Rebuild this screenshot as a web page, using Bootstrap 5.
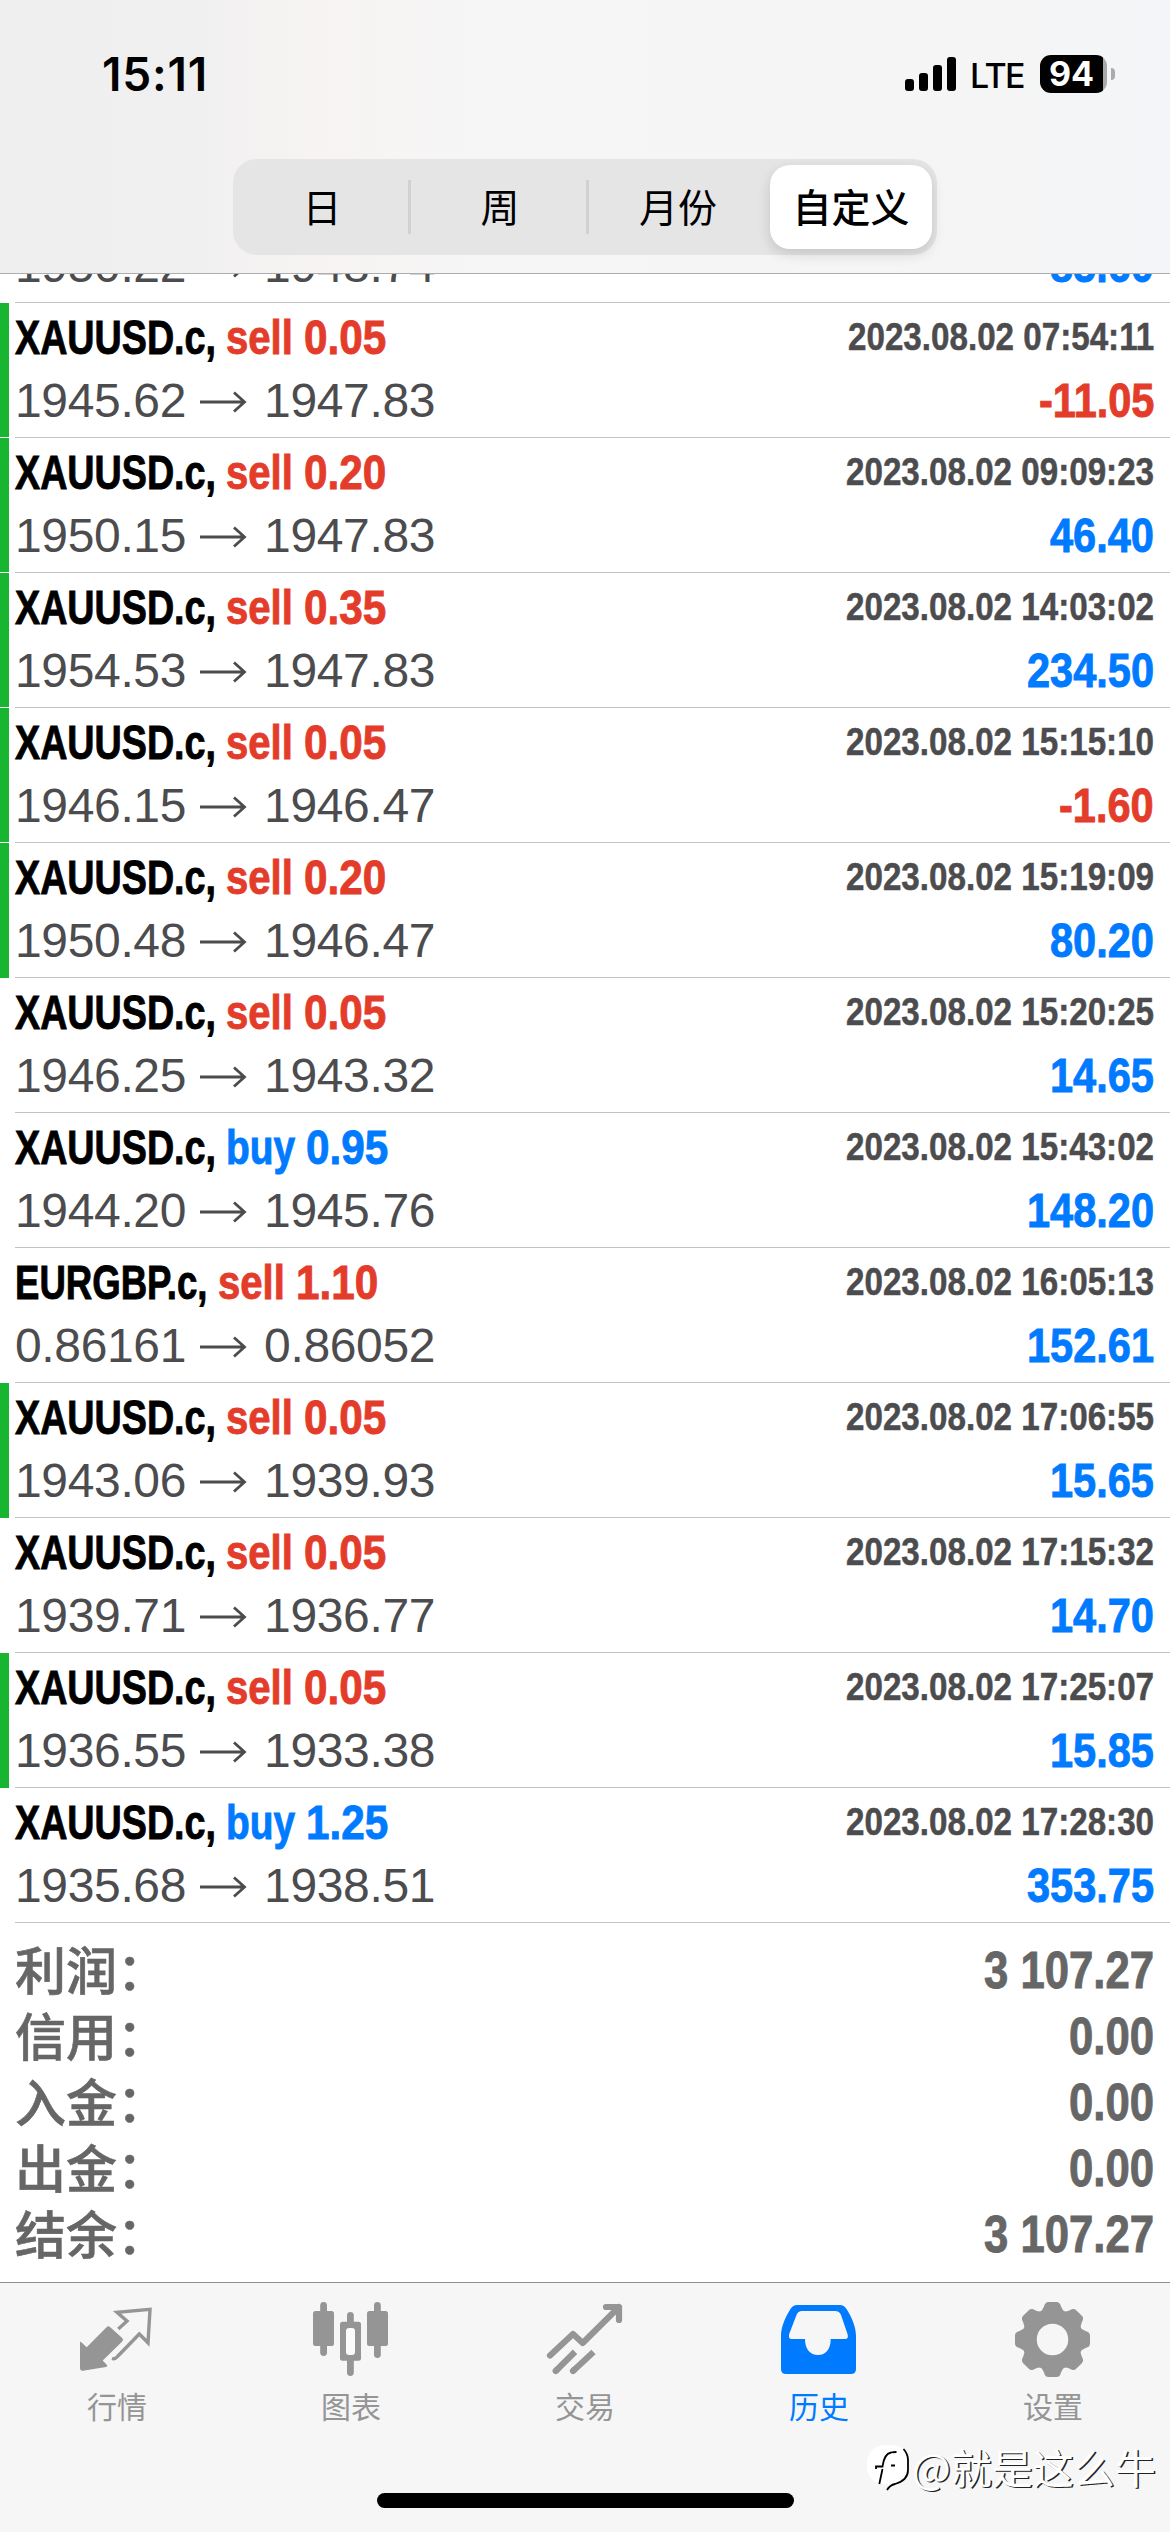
<!DOCTYPE html>
<html lang="zh-CN">
<head>
<meta charset="utf-8">
<meta name="viewport" content="width=device-width, initial-scale=1">
<title>历史</title>
<link href="https://cdn.jsdelivr.net/npm/bootstrap@5.3.0/dist/css/bootstrap.min.css" rel="stylesheet">
<style>
body{width:1170px;height:2532px;overflow:hidden;background:#fff;color:#000;font-family:"Liberation Sans","Noto Sans CJK SC",sans-serif}
.top-bar{height:274px;border-bottom:1px solid #adadb0;background:linear-gradient(90deg,#efefef 0,#f1f0f0 17%,#f7f4f3 28%,#f6f6f6 42%,#f5f5f5 85%,#f3f5f8 100%)}
.status{height:159px;padding:0 55px 0 102px;font-family:Inter,sans-serif}
.clock{font-size:46px;font-weight:600;line-height:56px;margin-top:46px;letter-spacing:.8px}
.net{margin-top:55px;height:38px}
.lte{font-size:34px;font-weight:500;line-height:38px;letter-spacing:-1.6px;margin:2px 0 0 14px}
.batt{width:67px;height:38px;margin-left:16px;border-radius:11px;background:linear-gradient(90deg,#000 63px,#a9a9a9 63px);color:#fff;font-size:34px;font-weight:700;line-height:38px;text-align:center;padding-right:4px}
.nub{width:4px;height:12px;margin:13px 0 0 4px;border-radius:0 4px 4px 0;background:#ababab}
.seg{width:704px;height:96px;border-radius:24px;background:#e6e5e6;padding:6px 5px 6px 0;font-family:"Noto Sans CJK SC",sans-serif;font-size:39px}
.seg-item{width:178px;height:84px;position:relative;padding-bottom:4px}
.seg-item.split{background:linear-gradient(#d1d1d4,#d1d1d4) right center/3px 54px no-repeat}
.seg-item.on{width:162px;margin-left:auto;background:#fff;border-radius:20px;font-weight:500;box-shadow:0 5px 14px rgba(0,0,0,.14)}
.deals{height:1649px;overflow:hidden}
.deal{height:135px;padding:6px 16px 0 15px;position:relative;background:linear-gradient(#c3c3c6,#c3c3c6) 15px 100%/1155px 1px no-repeat}
.deal.mark-g{border-left:9px solid #17b530;padding-left:6px;background-position:6px 100%}
.deal.mark-g+.deal.mark-g::before{content:"";position:absolute;left:-9px;top:-1px;width:9px;height:1px;background:#fff}
.sq{display:inline-block;transform-origin:0 50%;white-space:pre;-webkit-text-stroke:.9px currentColor}
.line1{height:61px;font-size:48px;font-weight:700;line-height:58px;white-space:nowrap}
.when{font-size:38px;line-height:57px;color:#4c4c4e;-webkit-text-stroke-width:.5px}
.line2{height:62px;font-size:48px;line-height:62px;color:#4c4c4e}
.price{letter-spacing:-.35px}
.amt{font-weight:700}
.c-red{color:#e43c2a}.c-blue{color:#007aff}
.arrow{margin:2px 17px 0 14px}
.totals{height:359px;padding:14px 16px 0 15px;color:#666}
.total{height:66px;line-height:67px;font-size:52px;font-weight:700}
.total .lbl{font-family:"Noto Sans CJK SC",sans-serif;font-size:51px;font-weight:500;line-height:62px;-webkit-text-stroke:.6px currentColor}
.tabs{height:250px;border-top:1px solid #8e8e91;background:#f6f6f6;position:relative}
.tab{width:234px;padding-top:17px;color:#959595;font-family:"Noto Sans CJK SC",sans-serif;font-size:30px}
.tab svg{width:84px;height:80px}
.tab span{line-height:40px;margin-top:5px}
.tab.on{color:#007aff}
.home{position:absolute;left:377px;top:210px;width:417px;height:15px;border-radius:8px;background:#000}
.wm{position:absolute;left:866px;top:157px;color:#fff;font-family:"Noto Sans CJK SC",sans-serif;font-size:41px;line-height:50px;white-space:nowrap;text-shadow:1.5px 1px 0 #222}
.wm svg{width:46px;height:52px}
</style>
</head>
<body>
<header class="top-bar">
  <div class="status d-flex justify-content-between">
    <div class="clock">15:11</div>
    <div class="net d-flex">
      <svg width="51" height="36" viewBox="0 0 51 36"><rect y="24" width="9" height="12" rx="3"/><rect x="14" y="18" width="9" height="18" rx="3"/><rect x="28" y="10" width="9" height="26" rx="3"/><rect x="42" y="2" width="9" height="34" rx="3"/></svg>
      <div class="lte">LTE</div>
      <div class="batt">94</div>
      <div class="nub"></div>
    </div>
  </div>
  <div class="seg d-flex mx-auto">
    <div class="seg-item split d-flex align-items-center justify-content-center">日</div>
    <div class="seg-item split d-flex align-items-center justify-content-center">周</div>
    <div class="seg-item d-flex align-items-center justify-content-center">月份</div>
    <div class="seg-item on d-flex align-items-center justify-content-center">自定义</div>
  </div>
</header>
<main>
  <section class="deals d-flex flex-column justify-content-end" id="deals"></section>
  <section class="totals" id="totals"></section>
</main>
<nav class="tabs">
  <div class="d-flex">
    <div class="tab d-flex flex-column align-items-center">
      <svg viewBox="0 0 84 80"><path fill="currentColor" d="M5 43Q5 41 6.600 42.500L11.700 47.300 31.800 27Q33.300 25.500 35 27L47.200 38Q49 39.800 47.200 41.500L27.700 60.500 32 65Q33 66.600 31 67L8 70.700Q5 71 5 68Z"/><path fill="none" stroke="currentColor" stroke-width="3.400" d="M43.300 29L52 21 42 12.300 75 9.300 73 42.800 64.300 34 42.500 56.500Q40 59.500 37 58.500"/></svg>
      <span>行情</span></div>
    <div class="tab d-flex flex-column align-items-center">
      <svg viewBox="0 0 84 80" fill="currentColor"><rect x="4" y="11" width="21" height="35" rx="2.500"/><rect x="11.200" y="2" width="6.800" height="54" rx="3.400"/><rect x="58" y="11" width="21" height="35" rx="2.500"/><rect x="65" y="2" width="6.800" height="56" rx="3.400"/><rect x="38" y="12" width="6.800" height="64" rx="3.400"/><rect x="31" y="21.700" width="21" height="39" rx="2.500"/><rect x="37" y="28" width="9" height="27" rx="3" fill="#fbfbfb"/></svg>
      <span>图表</span></div>
    <div class="tab d-flex flex-column align-items-center">
      <svg viewBox="0 0 84 80" fill="none" stroke="currentColor" stroke-width="6.200" stroke-linecap="round" stroke-linejoin="round"><path d="M7 55.500L30 34 39.700 43 76 7M63 7H76V20"/><path stroke-linecap="butt" d="M12.700 71L32 51.700M30 71L50.500 52"/><path d="M12.700 71l1-1M30 71l1-1"/></svg>
      <span>交易</span></div>
    <div class="tab on d-flex flex-column align-items-center">
      <svg viewBox="0 0 84 80"><path fill="currentColor" fill-rule="evenodd" d="M20 5H63Q67 5 69.500 9C74 16 79 26 79 36V69Q79 74 74 74H9Q4 74 4 69V36C4 26 9 16 13.500 9Q16 5 20 5ZM25 11Q21 11 19.500 15L12.200 34Q11 39 14.500 39H28C28 49 33 55 41 55S53.700 49 53.700 39H68Q72 39 70.500 34L64 15Q62.500 11 58 11Z"/></svg>
      <span>历史</span></div>
    <div class="tab d-flex flex-column align-items-center">
      <svg viewBox="0 0 84 80" fill="currentColor"><defs><path id="tooth" d="M-14-26Q-9.500-29.500-8.500-33-7.500-37.500-4-37.500H4Q7.500-37.500 8.500-33 9.500-29.500 14-26Z"/></defs><g transform="translate(41.500 39.500)"><circle r="23" fill="none" stroke="currentColor" stroke-width="14.500"/><use href="#tooth"/><use href="#tooth" transform="rotate(45)"/><use href="#tooth" transform="rotate(90)"/><use href="#tooth" transform="rotate(135)"/><use href="#tooth" transform="rotate(180)"/><use href="#tooth" transform="rotate(225)"/><use href="#tooth" transform="rotate(270)"/><use href="#tooth" transform="rotate(315)"/></g></svg>
      <span>设置</span></div>
  </div>
  <div class="home"></div>
  <div class="wm d-flex align-items-center">
    <svg viewBox="0 0 46 52"><path fill="#fff" d="M20 5C34 4 42 10 42 20V30C42 38 36 42 29 44L22 49V44C8 45 .700 37 .700 25S8 5 20 5Z"/><path fill="none" stroke="#000" stroke-width="1.800" d="M37.500 9Q42 14 42 20V30C42 38 36 42 29 44Q24 45 21 50M13.300 44L16.500 29M10 29V26.500H16.500Q18 14 25 12.500 27 12 30.500 12M25 25.500H29"/></svg>
    <span>@就是这么牛</span>
  </div>
</nav>
<script src="https://cdn.jsdelivr.net/npm/bootstrap@5.3.0/dist/js/bootstrap.bundle.min.js"></script>
<script>
// green flag, symbol, side, volume, open, close, time, profit
const deals = [
  [0,'XAUUSD.c','sell','0.05','1950.22','1948.74','2023.08.02 07:40:00','85.60'],
  [1,'XAUUSD.c','sell','0.05','1945.62','1947.83','2023.08.02 07:54:11','-11.05'],
  [1,'XAUUSD.c','sell','0.20','1950.15','1947.83','2023.08.02 09:09:23','46.40'],
  [1,'XAUUSD.c','sell','0.35','1954.53','1947.83','2023.08.02 14:03:02','234.50'],
  [1,'XAUUSD.c','sell','0.05','1946.15','1946.47','2023.08.02 15:15:10','-1.60'],
  [1,'XAUUSD.c','sell','0.20','1950.48','1946.47','2023.08.02 15:19:09','80.20'],
  [0,'XAUUSD.c','sell','0.05','1946.25','1943.32','2023.08.02 15:20:25','14.65'],
  [0,'XAUUSD.c','buy','0.95','1944.20','1945.76','2023.08.02 15:43:02','148.20'],
  [0,'EURGBP.c','sell','1.10','0.86161','0.86052','2023.08.02 16:05:13','152.61'],
  [1,'XAUUSD.c','sell','0.05','1943.06','1939.93','2023.08.02 17:06:55','15.65'],
  [0,'XAUUSD.c','sell','0.05','1939.71','1936.77','2023.08.02 17:15:32','14.70'],
  [1,'XAUUSD.c','sell','0.05','1936.55','1933.38','2023.08.02 17:25:07','15.85'],
  [0,'XAUUSD.c','buy','1.25','1935.68','1938.51','2023.08.02 17:28:30','353.75']
];
const totals = [['利润：','3 107.27'],['信用：','0.00'],['入金：','0.00'],['出金：','0.00'],['结余：','3 107.27']];
const sq = (text, k, cls = '') => `<span class="sq ${cls}" data-k="${k}">${text}</span>`;
const arrow = '<svg class="arrow" width="47" height="24" viewBox="0 0 47 24" fill="none" stroke="#4c4c4e" stroke-width="2.8"><path d="M0 12H44M34 2.500L44.500 12 34 21.500"/></svg>';
document.getElementById('deals').innerHTML = deals.map(d => {
  const side = d[2] === 'buy' ? 'c-blue' : 'c-red';
  return `<div class="deal flex-shrink-0 ${d[0] ? 'mark-g' : ''}">
    <div class="line1 d-flex justify-content-between"><div class="d-flex">${sq(d[1] + ', ', d[1][0] === 'X' ? .785 : .762)}${sq(d[2] + ' ', d[2] === 'buy' ? .81 : .835, side)}${sq(d[3], .88, side)}</div>${sq(d[6], .873, 'when')}</div>
    <div class="line2 d-flex justify-content-between"><div class="d-flex align-items-center"><span class="price">${d[4]}</span>${arrow}<span class="price">${d[5]}</span></div>${sq(d[7], .865, 'amt ' + (d[7][0] === '-' ? 'c-red' : 'c-blue'))}</div>
  </div>`;
}).join('');
document.getElementById('totals').innerHTML = totals.map(t => `<div class="total d-flex justify-content-between"><span class="lbl">${t[0]}</span>${sq(t[1], .84)}</div>`).join('');
// condense the text and take up only its condensed width
document.querySelectorAll('.sq').forEach(el => {
  const k = +el.dataset.k, w = el.getBoundingClientRect().width;
  el.style.transform = `scaleX(${k})`;
  el.style.marginRight = `${-(1 - k) * w}px`;
});
</script>
</body>
</html>
